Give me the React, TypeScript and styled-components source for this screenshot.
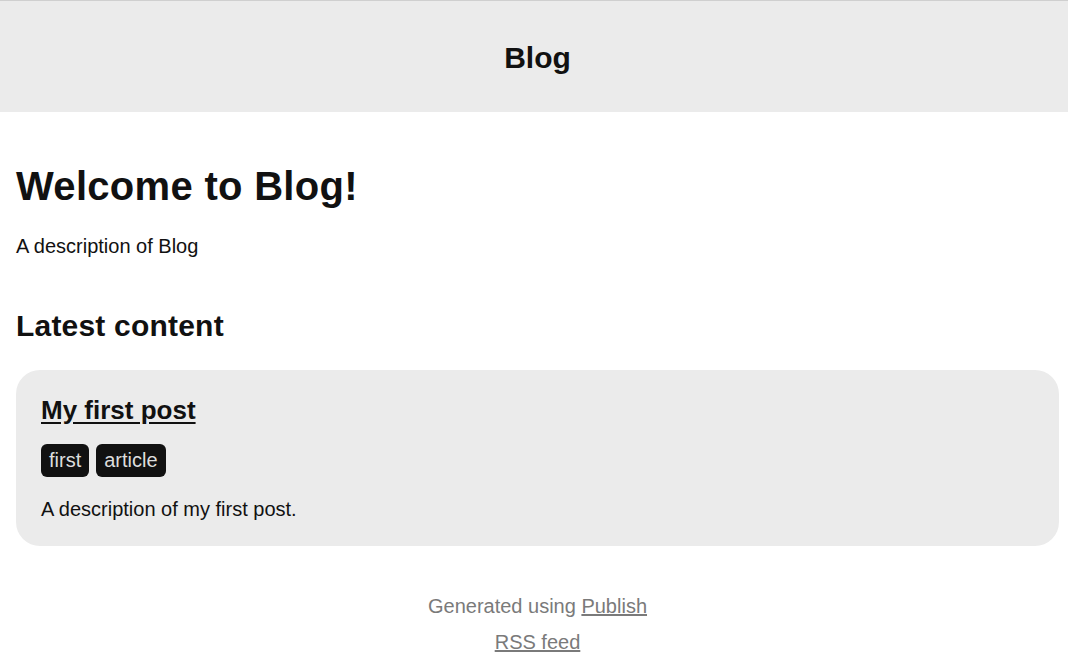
import React from "react";
import styled, { createGlobalStyle } from "styled-components";

const GlobalStyle = createGlobalStyle`
  *, *::before, *::after { box-sizing: border-box; margin: 0; padding: 0; }
  html, body { overflow: hidden; background: #fff; }
  body {
    font-family: "Liberation Sans", Arial, Helvetica, sans-serif;
    color: #111;
    font-size: 20px;
  }
`;

const Page = styled.div`
  width: 1075px;
  text-align: center;
`;

const Header = styled.header`
  background-color: #ebebeb;
  border-top: 1px solid #cfcfcf;
  height: 112px;
  display: flex;
  align-items: center;
  justify-content: center;
`;

const SiteName = styled.a`
  font-size: 30px;
  font-weight: bold;
  color: #111;
  text-decoration: none;
  margin-top: 2px;
`;

const Wrapper = styled.main`
  padding: 51px 16px 0;
  text-align: left;
`;

const Title = styled.h1`
  font-size: 40px;
  font-weight: bold;
  line-height: 46px;
  letter-spacing: 0.3px;
  margin-bottom: 26px;
`;

const Description = styled.p`
  font-size: 20px;
  line-height: 23px;
  margin-bottom: 50px;
`;

const SectionTitle = styled.h2`
  font-size: 30px;
  font-weight: bold;
  line-height: 35px;
  letter-spacing: 0.2px;
  margin-bottom: 27px;
`;

const ItemList = styled.ul`
  list-style: none;
`;

const Item = styled.li`
  display: block;
  background-color: #ebebeb;
  border-radius: 24px;
  padding: 25px;
`;

const ItemTitle = styled.h1`
  font-size: 26px;
  font-weight: bold;
  line-height: 30px;
  margin-bottom: 19px;

  a {
    color: #111;
    text-decoration: underline;
    text-underline-offset: 3px;
  }
`;

const TagList = styled.ul`
  list-style: none;
  display: flex;
  gap: 7px;
  margin-bottom: 21px;
`;

const Tag = styled.li`
  background-color: #111;
  color: #ddd;
  font-size: 20px;
  line-height: 23px;
  padding: 5px 8px;
  border-radius: 6px;
`;

const ItemDescription = styled.p`
  font-size: 20px;
  line-height: 23px;
`;

const Footer = styled.footer`
  color: #7a7a7a;
  font-size: 20px;
  line-height: 23px;
  padding-top: 49px;

  p {
    margin-bottom: 13px;
  }

  a {
    color: #7a7a7a;
    text-decoration: underline;
  }
`;

export default function App() {
  return (
    <>
      <GlobalStyle />
      <Page>
        <Header>
          <SiteName href="#">Blog</SiteName>
        </Header>
        <Wrapper>
          <Title>Welcome to Blog!</Title>
          <Description>A description of Blog</Description>
          <SectionTitle>Latest content</SectionTitle>
          <ItemList>
            <Item>
              <ItemTitle>
                <a href="#">My first post</a>
              </ItemTitle>
              <TagList>
                <Tag>first</Tag>
                <Tag>article</Tag>
              </TagList>
              <ItemDescription>A description of my first post.</ItemDescription>
            </Item>
          </ItemList>
        </Wrapper>
        <Footer>
          <p>
            Generated using <a href="#">Publish</a>
          </p>
          <p>
            <a href="#">RSS feed</a>
          </p>
        </Footer>
      </Page>
    </>
  );
}
